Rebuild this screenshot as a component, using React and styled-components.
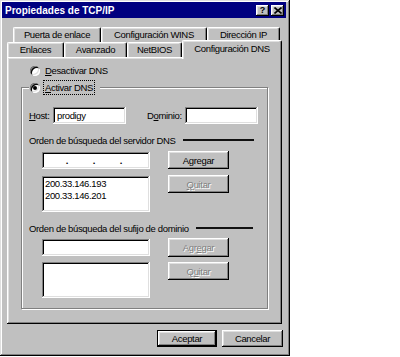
import React from "react";
import styled, { createGlobalStyle, css } from "styled-components";

const GlobalStyle = createGlobalStyle`
  html, body {
    margin: 0;
    padding: 0;
    background: #fff;
  }
  body {
    font-family: "Liberation Sans", Arial, sans-serif;
    font-size: 9.5px;
    letter-spacing: -0.35px;
    color: #000;
  }
`;

// win95 bevels
const raised = css`
  box-shadow: inset -1px -1px #000, inset 1px 1px #fff, inset -2px -2px #808080,
    inset 2px 2px #dfdfdf;
`;
const sunken = css`
  box-shadow: inset -1px -1px #fff, inset 1px 1px #808080, inset -2px -2px #dfdfdf,
    inset 2px 2px #000;
`;

const Window = styled.div`
  width: 290px;
  height: 356px;
  box-sizing: border-box;
  padding: 2px 4px 0 2px;
  background: #c0c0c0;
  box-shadow: inset -1px -1px #000, inset 1px 1px #dfdfdf, inset -2px -2px #808080,
    inset 2px 2px #fff;
`;

const TitleBar = styled.div`
  height: 16px;
  display: flex;
  align-items: center;
  padding: 0 2px 0 3px;
  background: #000080;
  color: #fff;
  font-weight: bold;
  font-size: 10px;
  letter-spacing: 0;
`;

const Title = styled.span`
  flex: 1;
`;

const CaptionButton = styled.div`
  width: 13px;
  height: 11px;
  margin-left: 2px;
  display: flex;
  align-items: center;
  justify-content: center;
  background: #c0c0c0;
  color: #000;
  font-size: 9px;
  font-weight: bold;
  ${raised}
`;

const Body = styled.div`
  padding: 8px 0 0 5px;
`;

const TabRow = styled.div`
  display: flex;
  align-items: flex-end;
  height: ${(p) => p.$h}px;
  margin-left: ${(p) => p.$offset || 0}px;
`;

const Tab = styled.div`
  position: relative;
  width: ${(p) => p.$w}px;
  height: 15px;
  box-sizing: border-box;
  display: flex;
  align-items: center;
  justify-content: center;
  padding-bottom: 1px;
  background: #c0c0c0;
  border-top: 1px solid #fff;
  border-left: 1px solid #fff;
  border-right: 1px solid #000;
  border-radius: 2px 2px 0 0;
  box-shadow: inset -1px 0 #808080, inset 1px 1px #dfdfdf;
  white-space: nowrap;

  ${(p) =>
    p.$active &&
    css`
      z-index: 1;
      height: 19px;
      margin-bottom: -2px;
      padding-bottom: 3px;
    `}
`;

const Panel = styled.div`
  width: 275px;
  height: 267px;
  box-sizing: border-box;
  padding: 7px 14px 0;
  background: #c0c0c0;
  ${raised}
`;

const RadioRow = styled.div`
  display: flex;
  align-items: center;
  gap: 4px;
  height: 13px;
  margin-left: ${(p) => p.$indent || 0}px;
`;

const RadioDot = styled.span`
  width: 10px;
  height: 10px;
  flex: none;
  border-radius: 50%;
  background: #fff;
  display: flex;
  align-items: center;
  justify-content: center;
  box-shadow: inset 1px 1px #808080, inset -1px -1px #fff, inset 2px 2px #000,
    inset -2px -2px #dfdfdf;

  &::after {
    content: "";
    width: 4px;
    height: 4px;
    border-radius: 50%;
    background: ${(p) => (p.$checked ? "#000" : "transparent")};
  }
`;

const RadioLabel = styled.span`
  padding: 1px 1px;
  outline: ${(p) => (p.$focus ? "1px dotted #000" : "none")};
`;

const GroupBox = styled.div`
  margin-top: 10px;
  height: 222px;
  box-sizing: border-box;
  padding: 0 9px 0 7px;
  border: 1px solid #808080;
  box-shadow: inset 1px 1px #fff, 1px 1px #fff;
`;

const Legend = styled.div`
  width: fit-content;
  height: 15px;
  margin: -8px 0 0 0;
  padding: 0 6px 0 1px;
  display: flex;
  align-items: center;
  background: #c0c0c0;
`;

const FieldRow = styled.div`
  display: flex;
  align-items: center;
  height: 18px;
  margin-top: 11px;
`;

const Label = styled.span`
  width: ${(p) => p.$w}px;
  margin-left: ${(p) => p.$gap || 0}px;
  flex: none;
  white-space: nowrap;
`;

const TextField = styled.div`
  width: ${(p) => p.$w || 108}px;
  height: 17px;
  box-sizing: border-box;
  padding: 0 4px;
  display: flex;
  align-items: center;
  background: #fff;
  ${sunken}
`;

const IpField = styled(TextField)`
  display: grid;
  grid-template-columns: repeat(4, 1fr);
  padding: 0;
`;

const IpPart = styled.span`
  text-align: right;
  font-weight: bold;
  padding-right: 1px;
`;

const SectionHeader = styled.div`
  display: flex;
  align-items: center;
  gap: 7px;
  height: 12px;
  margin-top: 10px;
  padding-right: ${(p) => p.$inset}px;
`;

const Rule = styled.div`
  flex: 1;
  height: 2px;
  background: #111;
`;

const ListGrid = styled.div`
  display: grid;
  grid-template-columns: 108px 61px;
  grid-template-rows: ${(p) => p.$top}px 37px;
  column-gap: 18px;
  row-gap: ${(p) => p.$gap}px;
  margin: ${(p) => p.$mt}px 0 0 13px;
  align-items: start;
`;

const ListBox = styled.div`
  height: 36px;
  box-sizing: border-box;
  padding: 2px 3px;
  line-height: 12px;
  background: #fff;
  ${sunken}
`;

const Button = styled.div`
  width: ${(p) => p.$w || 61}px;
  height: ${(p) => p.$h || 18}px;
  box-sizing: border-box;
  display: flex;
  align-items: center;
  justify-content: center;
  background: #c0c0c0;
  color: ${(p) => (p.$disabled ? "#808080" : "#000")};
  text-shadow: ${(p) => (p.$disabled ? "1px 1px #fff" : "none")};
  ${raised}

  ${(p) =>
    p.$default &&
    css`
      border: 1px solid #000;
    `}
`;

const Footer = styled.div`
  display: flex;
  justify-content: flex-end;
  gap: 5px;
  margin-top: 6px;
  padding-right: 3px;
`;

const CloseIcon = () => (
  <svg width="8" height="7" viewBox="0 0 8 7">
    <path d="M0.5 0.5 L7.5 6.5 M7.5 0.5 L0.5 6.5" stroke="#000" strokeWidth="1.6" />
  </svg>
);

export default function App() {
  return (
    <>
      <GlobalStyle />
      <Window>
        <TitleBar>
          <Title>Propiedades de TCP/IP</Title>
          <CaptionButton>?</CaptionButton>
          <CaptionButton>
            <CloseIcon />
          </CaptionButton>
        </TitleBar>

        <Body>
          <TabRow $h={16} $offset={6}>
            <Tab $w={88}>Puerta de enlace</Tab>
            <Tab $w={106}>Configuración WINS</Tab>
            <Tab $w={73}>Dirección IP</Tab>
          </TabRow>
          <TabRow $h={15}>
            <Tab $w={57}>Enlaces</Tab>
            <Tab $w={63}>Avanzado</Tab>
            <Tab $w={55}>NetBIOS</Tab>
            <Tab $w={100} $active>
              Configuración DNS
            </Tab>
          </TabRow>

          <Panel>
            <RadioRow $indent={9}>
              <RadioDot />
              <RadioLabel>
                <u>D</u>esactivar DNS
              </RadioLabel>
            </RadioRow>

            <GroupBox>
              <Legend>
                <RadioRow>
                  <RadioDot $checked />
                  <RadioLabel $focus>
                    <u>A</u>ctivar DNS
                  </RadioLabel>
                </RadioRow>
              </Legend>

              <FieldRow>
                <Label $w={24}>
                  <u>H</u>ost:
                </Label>
                <TextField $w={73}>prodigy</TextField>
                <Label $w={38} $gap={21}>
                  D<u>o</u>minio:
                </Label>
                <TextField $w={73} />
              </FieldRow>

              <SectionHeader $inset={4}>
                <span>Orden de búsqueda del servidor DNS</span>
                <Rule />
              </SectionHeader>
              <ListGrid $top={18} $gap={6} $mt={5}>
                <IpField style={{ alignSelf: "end" }}>
                  <IpPart>.</IpPart>
                  <IpPart>.</IpPart>
                  <IpPart>.</IpPart>
                  <span />
                </IpField>
                <Button>
                  Agre<u>g</u>ar
                </Button>
                <ListBox style={{ marginTop: 1 }}>
                  200.33.146.193
                  <br />
                  200.33.146.201
                </ListBox>
                <Button $disabled>
                  <u>Q</u>uitar
                </Button>
              </ListGrid>

              <SectionHeader $inset={5}>
                <span>Orden de búsqueda del sufijo de dominio</span>
                <Rule />
              </SectionHeader>
              <ListGrid $top={19} $gap={5} $mt={4}>
                <TextField style={{ alignSelf: "center" }} />
                <Button $h={19} $disabled>
                  Agr<u>e</u>gar
                </Button>
                <ListBox />
                <Button $disabled>
                  Q<u>u</u>itar
                </Button>
              </ListGrid>
            </GroupBox>
          </Panel>
        </Body>

        <Footer>
          <Button $w={60} $h={17} $default>
            Aceptar
          </Button>
          <Button $w={61} $h={17}>
            Cancelar
          </Button>
        </Footer>
      </Window>
    </>
  );
}
